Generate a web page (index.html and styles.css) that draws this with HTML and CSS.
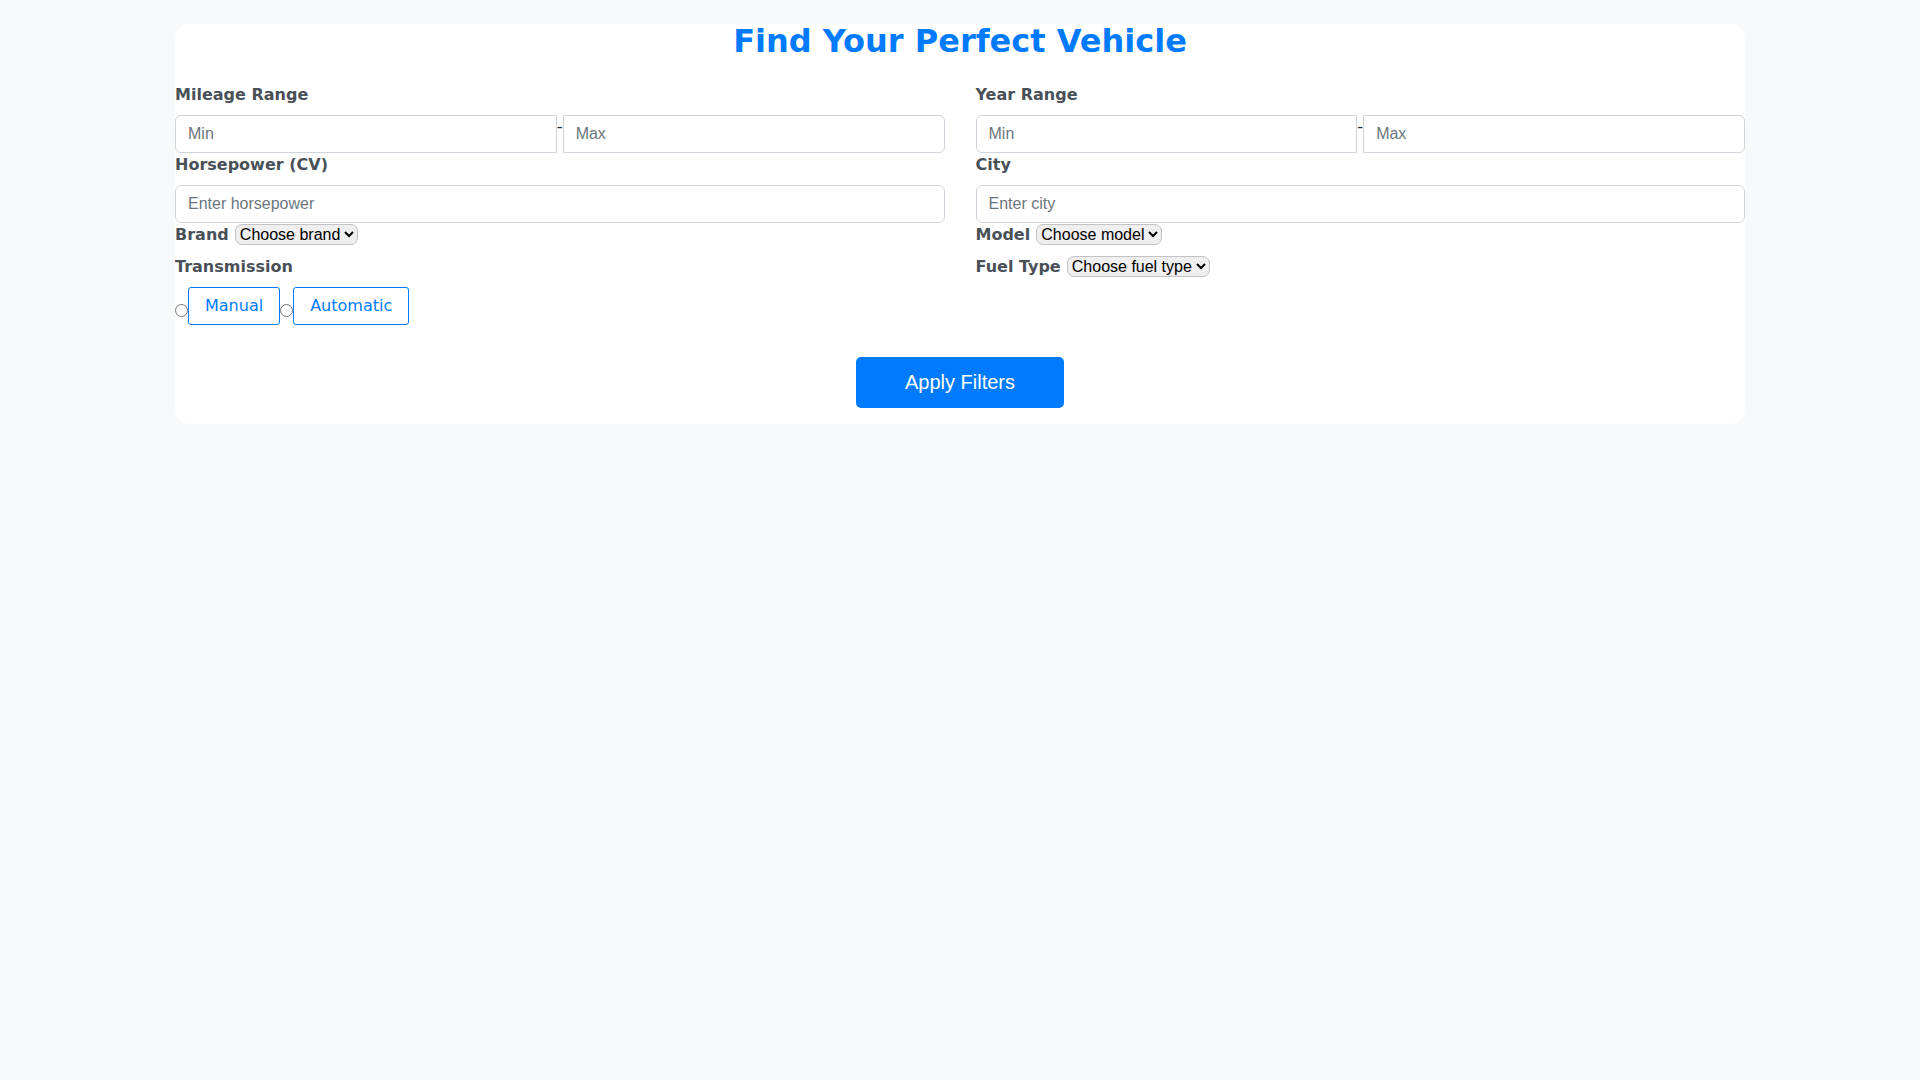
FILE: index.html
```html
<!DOCTYPE html>
<html lang="en">
<head>
<meta charset="utf-8">
<title>Find Your Perfect Vehicle</title>
<link rel="stylesheet" href="styles.css">
</head>
<body>
<div class="card">
  <h2 class="title">Find Your Perfect Vehicle</h2>
  <form class="filters">
    <div class="col">
      <div class="group">
        <label class="lbl">Mileage Range</label>
        <div class="range">
          <input class="field first" type="text" placeholder="Min">
          <span class="dash">-</span>
          <input class="field last" type="text" placeholder="Max">
        </div>
      </div>
      <div class="group">
        <label class="lbl">Horsepower (CV)</label>
        <input class="field single" type="text" placeholder="Enter horsepower">
      </div>
      <div class="group inline">
        <label class="lbl">Brand</label>
        <select class="sel"><option>Choose brand</option></select>
      </div>
      <div class="group">
        <label class="lbl">Transmission</label>
        <div class="radios">
          <input class="radio" type="radio" name="tr" id="tr-m"><label class="opt" for="tr-m">Manual</label><input class="radio" type="radio" name="tr" id="tr-a"><label class="opt" for="tr-a">Automatic</label>
        </div>
      </div>
    </div>
    <div class="col">
      <div class="group">
        <label class="lbl">Year Range</label>
        <div class="range">
          <input class="field first" type="text" placeholder="Min">
          <span class="dash">-</span>
          <input class="field last" type="text" placeholder="Max">
        </div>
      </div>
      <div class="group">
        <label class="lbl">City</label>
        <input class="field single" type="text" placeholder="Enter city">
      </div>
      <div class="group inline">
        <label class="lbl">Model</label>
        <select class="sel"><option>Choose model</option></select>
      </div>
      <div class="group inline">
        <label class="lbl">Fuel Type</label>
        <select class="sel"><option>Choose fuel type</option></select>
      </div>
    </div>
    <div class="actions">
      <button class="apply" type="button">Apply Filters</button>
    </div>
  </form>
</div>
</body>
</html>
```
FILE: styles.css
```css
html, body {
  margin: 0;
  padding: 0;
}
body {
  background: #f8f9fa;
  font-family: "DejaVu Sans", sans-serif;
  font-size: 16px;
  line-height: 24px;
  color: #212529;
}
.card {
  width: 1570px;
  margin: 24px auto 0;
  background: #ffffff;
  border-radius: 15px;
  padding: 1px 0 16px;
  box-sizing: border-box;
}
.title {
  margin: 0 0 26px;
  font-size: 32px;
  line-height: 32px;
  font-weight: bold;
  color: #007bff;
  text-align: center;
}
.filters {
  display: grid;
  grid-template-columns: 1fr 1fr;
  column-gap: 31px;
}
.col {
  display: flex;
  flex-direction: column;
}
.lbl {
  display: inline-block;
  margin-bottom: 8px;
  font-weight: bold;
  color: #495057;
}
.group {
  display: block;
}
.range {
  display: flex;
  align-items: flex-start;
}
.dash {
  line-height: 24px;
  color: #212529;
}
.field {
  display: block;
  box-sizing: border-box;
  height: 38px;
  margin: 0;
  padding: 6px 12px;
  border: 1px solid #ced4da;
  border-radius: 6px;
  background: #ffffff;
  font-family: "Liberation Sans", Arial, sans-serif;
  font-size: 16px;
  line-height: 24px;
  color: #495057;
  outline: none;
}
.field::placeholder {
  color: #6c757d;
}
.range .field {
  flex: 1 1 0;
  min-width: 0;
}
.field.first {
  border-radius: 6px 0 0 6px;
}
.field.last {
  border-radius: 0 6px 6px 0;
}
.field.single {
  width: 100%;
}
.sel {
  font-family: "Liberation Sans", Arial, sans-serif;
  font-size: 16px;
  color: #000000;
  margin-left: 1px;
  background-color: #efefef;
  border: 1px solid #c3c3c6;
  border-radius: 7px;
  padding: 0;
}
.radios {
  display: flex;
  align-items: center;
}
.radio {
  width: 13px;
  height: 13px;
  margin: 9px 0 0 0;
}
.opt {
  display: block;
  box-sizing: border-box;
  height: 38px;
  padding: 6px 16px;
  border: 1px solid #007bff;
  border-radius: 3px;
  color: #007bff;
  line-height: 24px;
}
.actions {
  grid-column: 1 / 3;
  display: flex;
  justify-content: center;
  margin-top: 32px;
}
.apply {
  border: none;
  border-radius: 5px;
  background: #007bff;
  color: #ffffff;
  font-family: "Liberation Sans", Arial, sans-serif;
  font-size: 20px;
  line-height: 27px;
  padding: 12px 49px;
  cursor: pointer;
}
```
